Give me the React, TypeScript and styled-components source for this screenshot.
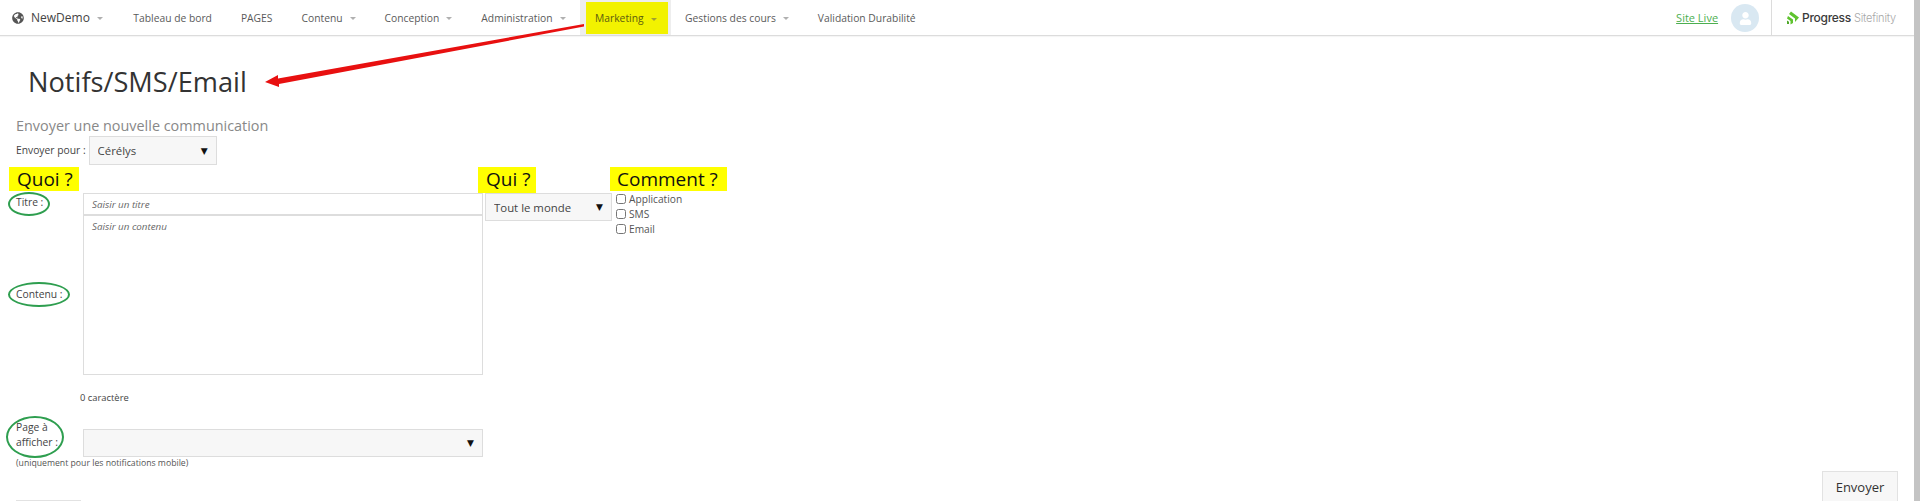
import styled, { createGlobalStyle } from 'styled-components';
import { FaGlobeAmericas, FaUser } from 'react-icons/fa';

const GlobalStyle = createGlobalStyle`
  html, body {
    margin: 0;
    height: 100%;
    overflow: hidden;
    background: #fff;
    font-family: "Open Sans", "Liberation Sans", sans-serif;
  }
`;

const Screen = styled.div`
  position: relative;
  display: flex;
  width: 1920px;
  height: 501px;
  overflow: hidden;
`;

const Page = styled.div`
  flex: 1;
  min-width: 0;
`;

const Scrollbar = styled.div`
  width: 6px;
  background: #c4c4c4;
`;

const Nav = styled.nav`
  display: flex;
  align-items: stretch;
  height: 35px;
  padding-left: 12px;
  border-bottom: 1px solid #dcdcdc;
  box-shadow: 0 1px 1px rgba(0, 0, 0, 0.04);
`;

const Brand = styled.div`
  display: flex;
  align-items: center;
  margin-right: 16px;
  color: #444;
  font-size: 12px;
  font-weight: 500;

  svg {
    margin-right: 7px;
  }
`;

const NavItem = styled.div<{ $active?: boolean }>`
  display: flex;
  align-items: center;
  padding: ${(p) => (p.$active ? '2px 3px 1px 6px' : '0 14.5px')};
  background: ${(p) => (p.$active ? '#eeeeee' : 'transparent')};
  color: #5a5a5a;
  font-size: 10.3px;
  white-space: nowrap;
`;

const NavHighlight = styled.div`
  display: flex;
  align-items: center;
  height: 100%;
  padding: 0 11px 0 9px;
  background: #f2f200;
  color: #5c5c10;
`;

const Caret = styled.span<{ $dark?: boolean }>`
  width: 0;
  height: 0;
  margin-left: 7px;
  margin-top: 2px;
  border-left: 3px solid transparent;
  border-right: 3px solid transparent;
  border-top: 3px solid ${(p) => (p.$dark ? '#a0a030' : '#b0b0b0')};
`;

const NavRight = styled.div`
  display: flex;
  align-items: center;
  margin-left: auto;
`;

const SiteLink = styled.a`
  color: #4caf50;
  font-size: 11px;
  text-decoration: underline;
`;

const Avatar = styled.div`
  display: flex;
  align-items: flex-end;
  justify-content: center;
  width: 28px;
  height: 28px;
  margin: 0 12px 0 13px;
  border-radius: 50%;
  background: #d9e8f2;
  color: #fff;
  font-size: 13px;
  padding-bottom: 7px;
  box-sizing: border-box;
`;

const LogoBox = styled.div`
  display: flex;
  align-items: center;
  align-self: stretch;
  padding: 0 18px 0 14px;
  border-left: 1px solid #dcdcdc;
`;

const LogoName = styled.span`
  margin-left: 2px;
  color: #3a3a3a;
  font-family: Inter, sans-serif;
  font-size: 12px;
  font-weight: 500;
  letter-spacing: -0.3px;
`;

const LogoProduct = styled.span`
  margin-left: 3px;
  color: #a8a8a8;
  font-family: Inter, sans-serif;
  font-size: 11px;
  font-weight: 300;
  letter-spacing: -0.2px;
`;

const Main = styled.main`
  padding: 0 16px;
`;

const Title = styled.h1`
  margin: 26px 0 0 12px;
  color: #333;
  font-size: 27.2px;
  font-weight: 400;
  line-height: 40px;
`;

const Subtitle = styled.h2`
  margin: 14px 0 0;
  color: #888;
  font-size: 14.4px;
  font-weight: 400;
  line-height: 20px;
`;

const SendRow = styled.div`
  display: flex;
  align-items: center;
  gap: 3px;
`;

const SmallLabel = styled.label`
  position: relative;
  color: #444;
  font-size: 10.3px;
  line-height: 15px;
`;

const SelectWrap = styled.div<{ $width: number; $height: number }>`
  position: relative;
  width: ${(p) => p.$width}px;
  height: ${(p) => p.$height}px;
`;

const Select = styled.select`
  width: 100%;
  height: 100%;
  padding: 0 8px;
  box-sizing: border-box;
  appearance: none;
  border: 1px solid #dddddd;
  border-radius: 0;
  background: #f7f7f7;
  color: #444;
  font-family: inherit;
  font-size: 11.4px;
`;

const SelectArrow = styled.span`
  position: absolute;
  top: 50%;
  right: 9px;
  transform: translateY(-50%);
  color: #111;
  font-family: "DejaVu Sans", sans-serif;
  font-size: 9px;
  pointer-events: none;
`;

const Columns = styled.div`
  display: flex;
  margin-top: 2px;
`;

const WhatColumn = styled.section`
  width: 462px;
`;

const WhoColumn = styled.section`
  width: 132px;
`;

const HowColumn = styled.section`
  width: 200px;
`;

const Tag = styled.div<{ $left: number; $right: number; $height: number; $offset?: number }>`
  display: inline-block;
  height: ${(p) => p.$height}px;
  margin-left: ${(p) => p.$offset ?? 0}px;
  padding: 0 ${(p) => p.$right}px 0 ${(p) => p.$left}px;
  background: #ffff00;
  color: #111;
  font-size: 19px;
  line-height: 24px;
  vertical-align: top;
`;

const FormGrid = styled.div`
  display: grid;
  grid-template-columns: 67px 400px;
  grid-template-rows: 23px 159px 54px 28px;
  margin-top: 2px;
`;

const TopLabel = styled(SmallLabel)<{ $lift: number }>`
  align-self: center;
  margin-bottom: ${(p) => p.$lift}px;
`;

const TitleInput = styled.input`
  box-sizing: border-box;
  width: 100%;
  height: 23px;
  padding: 0 8px;
  border: 1px solid #dddddd;
  border-bottom: 2px solid #dddddd;
  outline: none;
  font-family: inherit;
  font-size: 9.8px;
  font-style: italic;
  &::placeholder {
    color: #666;
    opacity: 1;
  }
`;

const ContentInput = styled.textarea`
  display: block;
  box-sizing: border-box;
  width: 100%;
  height: 159px;
  padding: 4px 8px;
  border: 1px solid #dddddd;
  border-top: 0;
  outline: none;
  resize: none;
  font-family: inherit;
  font-size: 9.8px;
  font-style: italic;
  &::placeholder {
    color: #666;
    opacity: 1;
  }
`;

const CharCount = styled.div`
  grid-column: 2;
  margin-left: -3px;
  color: #444;
  font-size: 9.4px;
  line-height: 45px;
`;

const PageLabel = styled(SmallLabel)`
  align-self: start;
  margin-top: -9px;
  width: 50px;
`;

const Hint = styled.div`
  margin-top: 0;
  color: #555;
  font-size: 8.7px;
  line-height: 12px;
`;

const Ring = styled.span<{ $left: number; $top: number; $width: number; $height: number }>`
  position: absolute;
  left: ${(p) => p.$left}px;
  top: ${(p) => p.$top}px;
  width: ${(p) => p.$width}px;
  height: ${(p) => p.$height}px;
  box-sizing: border-box;
  border: 2px solid #2e9e4f;
  border-radius: 50%;
`;

const WhoSelect = styled.div`
  margin: 0 0 0 7px;
`;

const Checks = styled.div`
  display: flex;
  flex-direction: column;
  margin: 0 0 0 6px;
`;

const CheckRow = styled.label`
  display: flex;
  align-items: center;
  gap: 3px;
  height: 15px;
  color: #555;
  font-size: 10.2px;
`;

const CheckBox = styled.input`
  width: 10px;
  height: 10px;
  margin: 0;
`;

const Footer = styled.div`
  display: flex;
  justify-content: space-between;
  align-items: flex-start;
  margin-top: 2px;
`;

const GhostButton = styled.button`
  width: 65px;
  height: 30px;
  margin-top: 29px;
  border: 1px solid #e2e2e2;
  background: #f7f7f7;
`;

const SendButton = styled.button`
  width: 76px;
  height: 34px;
  padding: 0 0 3px;
  border: 1px solid #e2e2e2;
  background: #f7f7f7;
  color: #333;
  font-family: inherit;
  font-size: 13px;
`;

const Annotation = styled.svg`
  position: absolute;
  left: 0;
  top: 0;
  pointer-events: none;
`;

const navItems = [
  { label: 'Tableau de bord' },
  { label: 'PAGES' },
  { label: 'Contenu', caret: true },
  { label: 'Conception', caret: true },
  { label: 'Administration', caret: true },
];

const ProgressMark = () => (
  <svg width="14" height="14" viewBox="0 0 14 14">
    <path d="M5 0.5 L13 6.5 L9 11 L9 7.5 L3 3 Z" fill="#5fc32f" />
    <path d="M2 5 L7 8.5 L7 12 L4.5 13.5 L4.5 10 L1 7.5 Z" fill="#5fc32f" />
    <path d="M1 9.5 L3 10.7 L3 13 L1 13 Z" fill="#4fa82a" />
  </svg>
);

const App = () => {
  return (
    <Screen>
      <GlobalStyle />
      <Page>
        <Nav>
          <Brand>
            <FaGlobeAmericas size={12} color="#555" />
            NewDemo
            <Caret />
          </Brand>
          {navItems.map((item) => (
            <NavItem key={item.label}>
              {item.label}
              {item.caret && <Caret />}
            </NavItem>
          ))}
          <NavItem $active>
            <NavHighlight>
              Marketing
              <Caret $dark />
            </NavHighlight>
          </NavItem>
          <NavItem>
            Gestions des cours
            <Caret />
          </NavItem>
          <NavItem>Validation Durabilité</NavItem>
          <NavRight>
            <SiteLink href="#">Site Live</SiteLink>
            <Avatar>
              <FaUser />
            </Avatar>
            <LogoBox>
              <ProgressMark />
              <LogoName>Progress</LogoName>
              <LogoProduct>Sitefinity</LogoProduct>
            </LogoBox>
          </NavRight>
        </Nav>
        <Main>
          <Title>Notifs/SMS/Email</Title>
          <Subtitle>Envoyer une nouvelle communication</Subtitle>
          <SendRow>
            <SmallLabel>Envoyer pour :</SmallLabel>
            <SelectWrap $width={128} $height={29}>
              <Select defaultValue="Cérélys">
                <option>Cérélys</option>
              </Select>
              <SelectArrow>▼</SelectArrow>
            </SelectWrap>
          </SendRow>
          <Columns>
            <WhatColumn>
              <Tag $left={8} $right={6} $height={24} $offset={-7}>
                Quoi ?
              </Tag>
              <FormGrid>
                <TopLabel $lift={5}>
                  Titre :
                  <Ring $left={-8} $top={-3} $width={42} $height={24} />
                </TopLabel>
                <TitleInput placeholder="Saisir un titre" />
                <TopLabel $lift={2}>
                  Contenu :
                  <Ring $left={-8} $top={-5} $width={62} $height={25} />
                </TopLabel>
                <ContentInput placeholder="Saisir un contenu" />
                <CharCount>0 caractère</CharCount>
                <PageLabel>
                  Page à afficher :
                  <Ring $left={-10} $top={-4} $width={58} $height={42} />
                </PageLabel>
                <SelectWrap $width={400} $height={28}>
                  <Select />
                  <SelectArrow>▼</SelectArrow>
                </SelectWrap>
              </FormGrid>
              <Hint>(uniquement pour les notifications mobile)</Hint>
            </WhatColumn>
            <WhoColumn>
              <Tag $left={8} $right={6} $height={26}>
                Qui ?
              </Tag>
              <WhoSelect>
                <SelectWrap $width={127} $height={28}>
                  <Select defaultValue="Tout le monde">
                    <option>Tout le monde</option>
                  </Select>
                  <SelectArrow>▼</SelectArrow>
                </SelectWrap>
              </WhoSelect>
            </WhoColumn>
            <HowColumn>
              <Tag $left={7} $right={9} $height={24}>
                Comment ?
              </Tag>
              <Checks>
                <CheckRow>
                  <CheckBox type="checkbox" />
                  Application
                </CheckRow>
                <CheckRow>
                  <CheckBox type="checkbox" />
                  SMS
                </CheckRow>
                <CheckRow>
                  <CheckBox type="checkbox" />
                  Email
                </CheckRow>
              </Checks>
            </HowColumn>
          </Columns>
          <Footer>
            <GhostButton />
            <SendButton>Envoyer</SendButton>
          </Footer>
        </Main>
      </Page>
      <Scrollbar />
      <Annotation width="700" height="100" viewBox="0 0 700 100">
        <polygon
          points="584,24 584,26.5 279,84 279,87 265,82 278,75 278,78.5"
          fill="#e81010"
        />
      </Annotation>
    </Screen>
  );
};

export default App;
